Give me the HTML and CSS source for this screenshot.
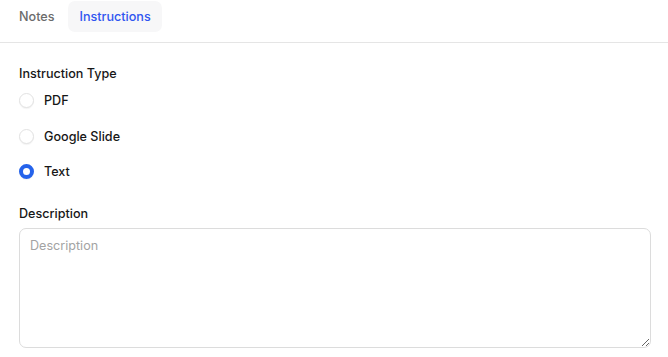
FILE: index.html
```html
<html>

<head>
  <meta name="viewport" content="width=device-width, initial-scale=1.0" />
  <title> instructions </title>
  <link rel="stylesheet" href="styles.css">
</head>

<body>
  <div class="tabs">
    <div class="tab">Notes</div>
    <div class="tab active">Instructions</div>
  </div>

  <div class="panel">
    <div class="field-label">Instruction Type</div>
    <div class="radio-list">
      <label class="radio-row">
        <input type="radio" name="type" class="radio">
        <span>PDF</span>
      </label>
      <label class="radio-row">
        <input type="radio" name="type" class="radio">
        <span>Google Slide</span>
      </label>
      <label class="radio-row">
        <input type="radio" name="type" class="radio" checked>
        <span>Text</span>
      </label>
    </div>

    <div class="field-label desc-label">Description</div>
    <textarea class="desc" placeholder="Description"></textarea>
  </div>
</body>

</html>
```

FILE: styles.css
```css
body {
  margin: 0px;
  font-family: Inter, "Noto Sans", sans-serif;
  color: #171717;
}

* {
  box-sizing: border-box;
}

.tabs {
  display: flex;
  gap: 3px;
  padding: 1px 8px 0px 8px;
  height: 43px;
  border-bottom: 1px solid #e5e5e5;
}

.tab {
  height: 31px;
  padding: 0px 11px;
  display: flex;
  align-items: center;
  font-size: 12.6px;
  font-weight: 500;
  color: #6b6b6b;
  border-radius: 7px;
}

.tab.active {
  background: #f7f7f8;
  color: #2f55f0;
}

.panel {
  padding: 23px 17px 0px 19px;
}

.field-label {
  font-size: 12.6px;
  font-weight: 500;
  line-height: 16px;
}

.radio-list {
  display: flex;
  flex-direction: column;
  margin-top: 1px;
}

.radio-row {
  display: flex;
  align-items: center;
  gap: 10px;
  height: 35.5px;
  font-size: 12.6px;
  font-weight: 500;
}

.radio {
  appearance: none;
  margin: 0px;
  width: 15px;
  height: 15px;
  border-radius: 50%;
  border: 1px solid #e2e2e2;
  background: #fff;
  box-shadow: 0px 1px 1px rgba(0, 0, 0, 0.05);
}

.radio:checked {
  border: 4.5px solid #2563eb;
  background: #fff;
}

.desc-label {
  margin-top: 16px;
}

.desc {
  display: block;
  width: 100%;
  height: 120px;
  margin-top: 6px;
  padding: 9px 10px;
  border: 1px solid #dcdcdc;
  border-radius: 7px;
  font-family: Inter, "Noto Sans", sans-serif;
  font-size: 12.6px;
  resize: vertical;
  outline: none;
}

.desc::placeholder {
  color: #a3a3a3;
}
```
